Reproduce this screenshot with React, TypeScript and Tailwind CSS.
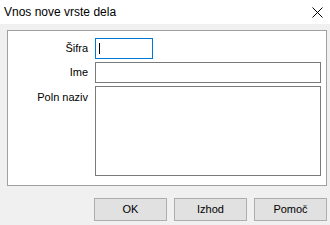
const App: React.FC = () => {
  const font = { fontFamily: '"Liberation Sans", Arial, sans-serif' }

  return (
    <div
      className="flex h-[225px] w-[330px] flex-col bg-[#f0f0f0] text-black"
      style={font}
    >
      {/* title bar */}
      <div className="flex h-[24px] items-center justify-between bg-white pl-[4px] pr-[7px]">
        <span className="text-[12px] leading-none">Vnos nove vrste dela</span>
        <svg width="11" height="11" viewBox="0 0 11 11" className="text-black">
          <path d="M0.5 0.5 L10.5 10.5 M10.5 0.5 L0.5 10.5" stroke="currentColor" strokeWidth="1" fill="none" />
        </svg>
      </div>

      {/* panel */}
      <div className="ml-[7px] mt-[6px] flex h-[156px] w-[320px] flex-col gap-[3px] border border-[#a0a0a0] bg-white pt-[7px] text-[11px]">
        <div className="flex items-center">
          <label className="w-[80px] text-right">Šifra</label>
          <div className="ml-[7px] flex h-[21px] w-[58px] items-center border border-[#0078d7] pl-[3px]">
            <span className="h-[11px] w-px bg-black"></span>
          </div>
        </div>
        <div className="flex items-center">
          <label className="w-[80px] text-right">Ime</label>
          <div className="ml-[7px] h-[21px] w-[226px] border border-[#7a7a7a]"></div>
        </div>
        <div className="flex items-start">
          <label className="w-[80px] pt-[4px] text-right leading-[14px]">Poln naziv</label>
          <div className="ml-[7px] h-[90px] w-[226px] border border-[#7a7a7a]"></div>
        </div>
      </div>

      {/* buttons */}
      <div className="mt-[12px] flex justify-end gap-[7px] pr-[3px] text-[11px]">
        {['OK', 'Izhod', 'Pomoč'].map((label) => (
          <button
            key={label}
            className="h-[23px] w-[73px] border border-[#adadad] bg-[#e1e1e1]"
          >
            {label}
          </button>
        ))}
      </div>
    </div>
  )
}

export default App
